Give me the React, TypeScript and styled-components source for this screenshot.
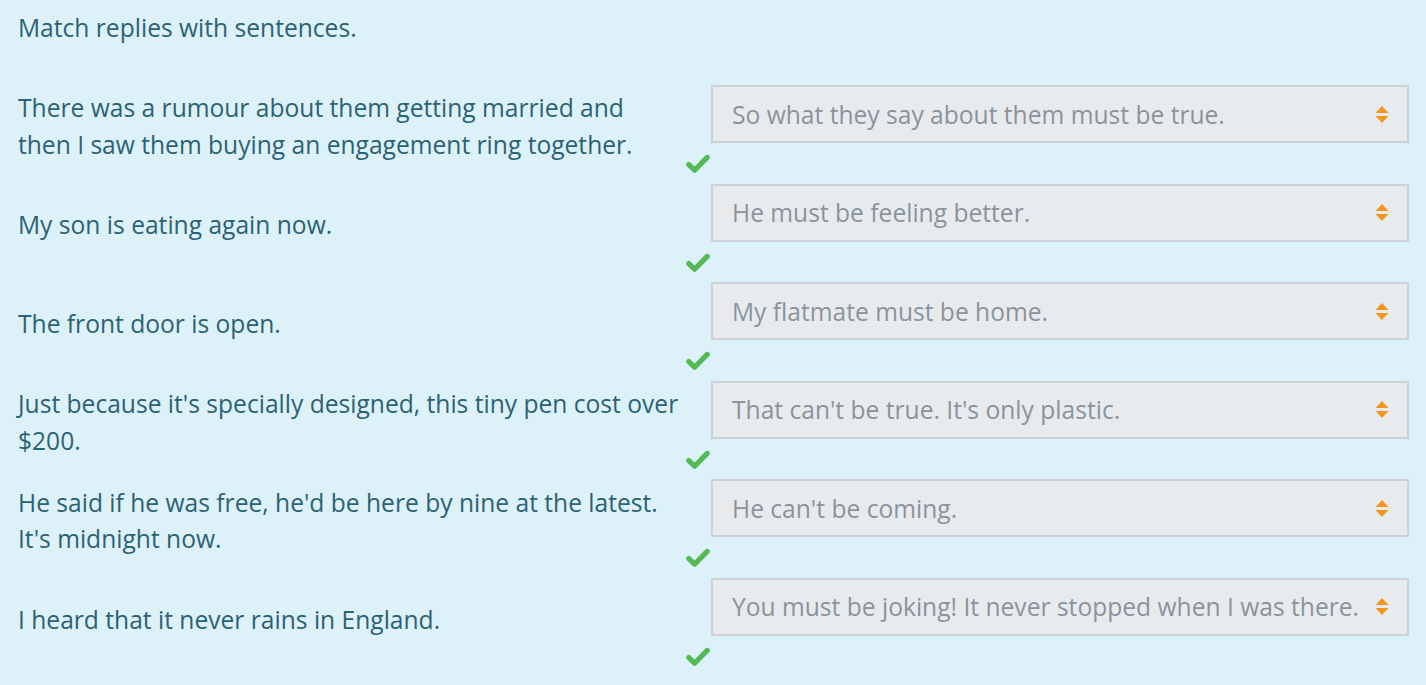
import React from 'react';
import styled, { createGlobalStyle } from 'styled-components';

const items = [
  {
    prompt:
      'There was a rumour about them getting married and then I saw them buying an engagement ring together.',
    reply: 'So what they say about them must be true.',
  },
  { prompt: 'My son is eating again now.', reply: 'He must be feeling better.' },
  { prompt: 'The front door is open.', reply: 'My flatmate must be home.' },
  {
    prompt: "Just because it's specially designed, this tiny pen cost over $200.",
    reply: "That can't be true. It's only plastic.",
  },
  {
    prompt: "He said if he was free, he'd be here by nine at the latest. It's midnight now.",
    reply: "He can't be coming.",
  },
  {
    prompt: 'I heard that it never rains in England.',
    reply: 'You must be joking! It never stopped when I was there.',
  },
];

const GlobalStyle = createGlobalStyle`
  html, body {
    margin: 0;
    padding: 0;
    background: #ddf1f8;
  }
  body {
    font-family: 'Open Sans', 'Noto Sans', sans-serif;
    overflow: hidden;
  }
`;

const Page = styled.div`
  width: 1426px;
  height: 685px;
  padding: 10px 17px 0 18px;
  box-sizing: border-box;
  color: #2c6275;
`;

const Heading = styled.p`
  margin: 0 0 39px;
  font-size: 24.6px;
  line-height: 36px;
`;

const Row = styled.div`
  display: flex;
  align-items: center;
  margin-bottom: 10px;
`;

const Prompt = styled.div`
  width: 668px;
  flex: none;
  box-sizing: border-box;
  padding: 0 4px 5px 0;
  font-size: 24.6px;
  line-height: 36.5px;
`;

const Answer = styled.div`
  flex: 1;
  display: flex;
  flex-direction: column;
`;

const Select = styled.div`
  margin-left: 25px;
  height: 58px;
  box-sizing: border-box;
  display: flex;
  align-items: center;
  justify-content: space-between;
  padding: 0 18px 0 19px;
  background: #e8ebee;
  border: 2px solid #ccd1d8;
  color: #8b939b;
  font-size: 24.6px;
  white-space: nowrap;
`;

const Arrows = styled.svg`
  flex: none;
  margin-left: 8px;
`;

const Check = styled.div`
  height: 30.6px;
  box-sizing: border-box;
  padding-top: 11px;
  svg {
    display: block;
  }
`;

const SortIcon = () => (
  <Arrows width="14" height="17" viewBox="0 0 14 17">
    <path d="M7 0 L13.5 7 H0.5 Z" fill="#f29521" />
    <path d="M7 17 L13.5 10 H0.5 Z" fill="#f29521" />
  </Arrows>
);

const CheckIcon = () => (
  <svg width="24" height="20" viewBox="0 0 24 20">
    <polyline
      points="2.8,10.6 8.6,16.2 21.2,3.4"
      fill="none"
      stroke="#55b955"
      strokeWidth="5.2"
      strokeLinecap="round"
      strokeLinejoin="round"
    />
  </svg>
);

export default function App() {
  return (
    <>
      <GlobalStyle />
      <Page>
        <Heading>Match replies with sentences.</Heading>
        {items.map((item, i) => (
          <Row key={i}>
            <Prompt>{item.prompt}</Prompt>
            <Answer>
              <Select>
                <span>{item.reply}</span>
                <SortIcon />
              </Select>
              <Check>
                <CheckIcon />
              </Check>
            </Answer>
          </Row>
        ))}
      </Page>
    </>
  );
}
